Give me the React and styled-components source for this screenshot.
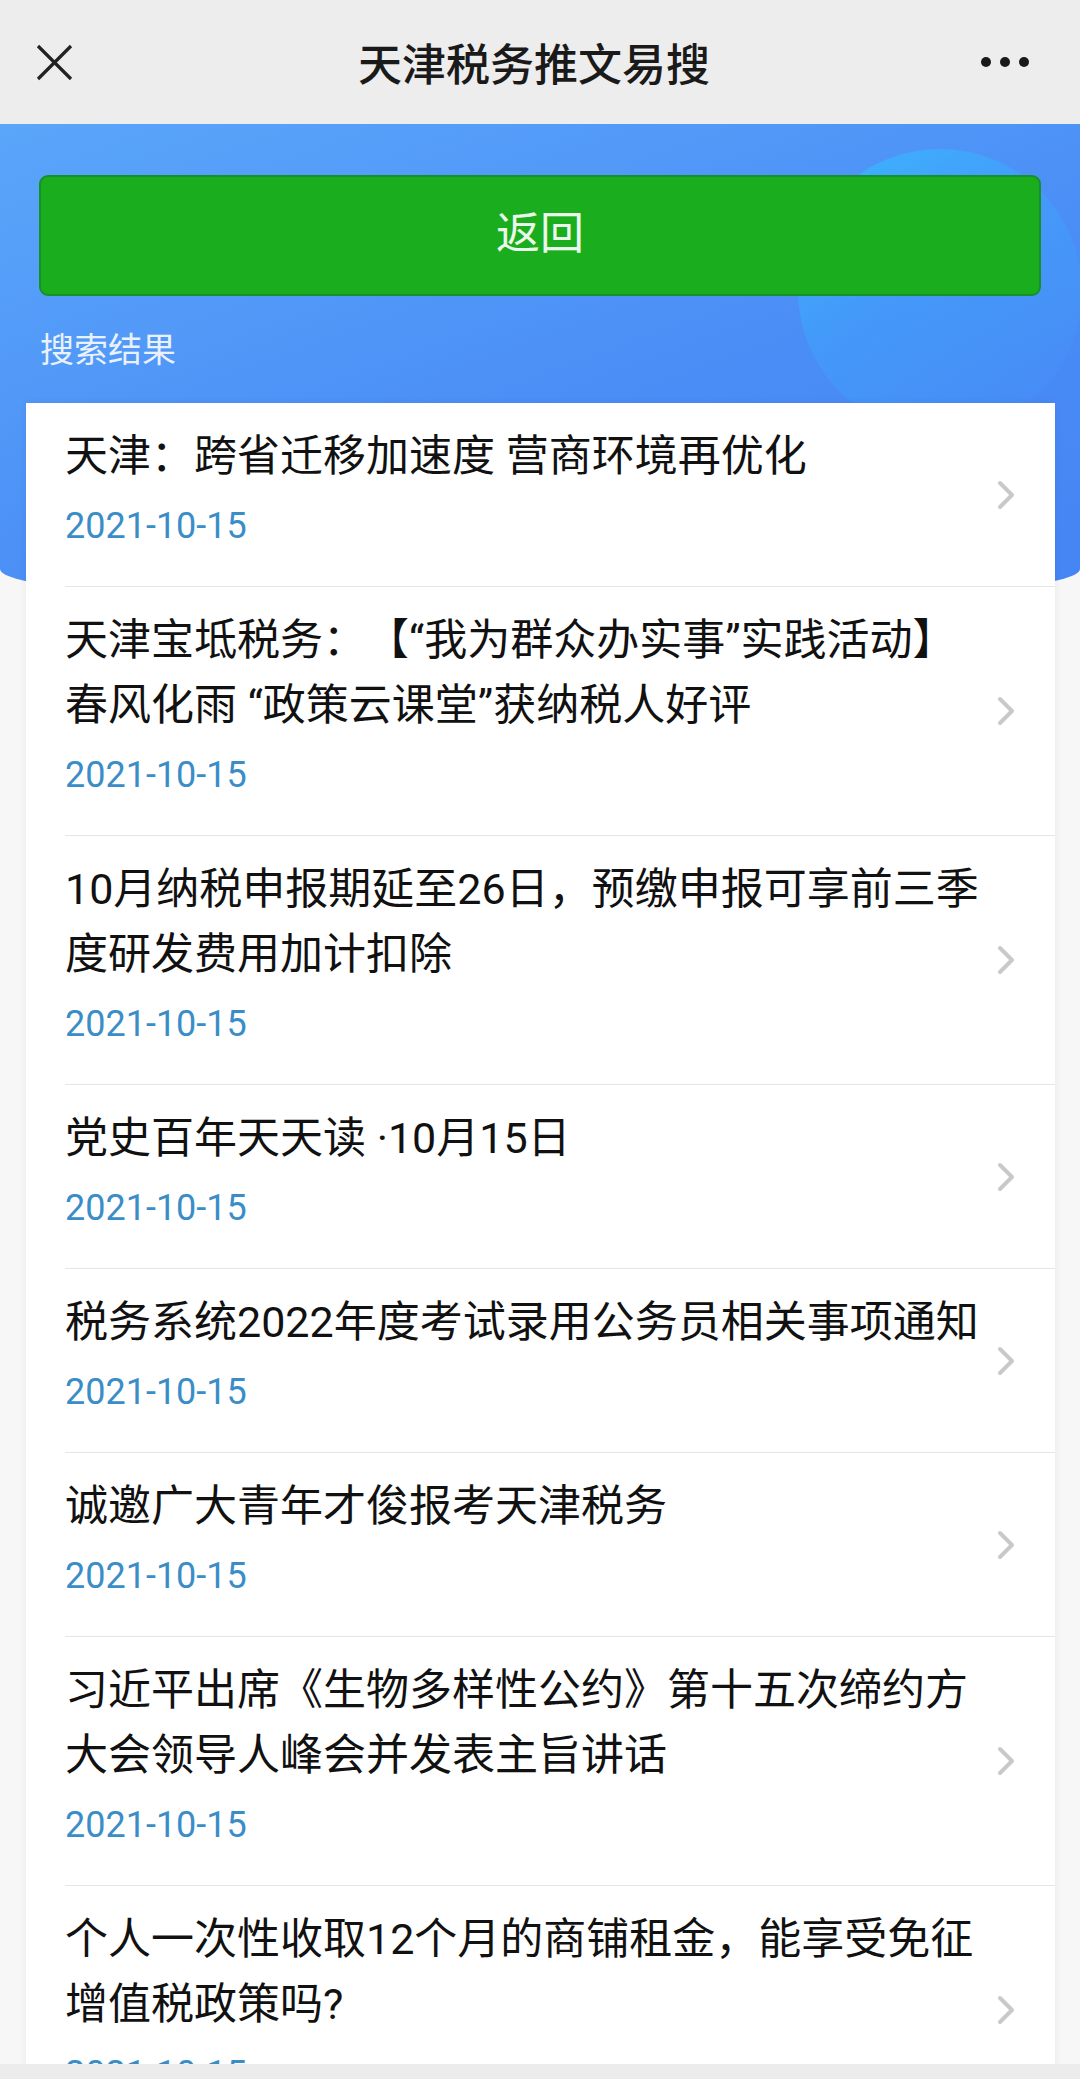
import styled, { createGlobalStyle } from "styled-components";

const GlobalStyle = createGlobalStyle`
  html, body {
    margin: 0;
    padding: 0;
    background: #f7f7f7;
  }
  body {
    font-family: Roboto, "Noto Sans CJK SC", sans-serif;
  }
`;

const articles = [
  { id: 1, title: "天津：跨省迁移加速度 营商环境再优化", date: "2021-10-15" },
  {
    id: 2,
    title: "天津宝坻税务：【“我为群众办实事”实践活动】春风化雨 “政策云课堂”获纳税人好评",
    date: "2021-10-15",
  },
  {
    id: 3,
    title: "10月纳税申报期延至26日，预缴申报可享前三季度研发费用加计扣除",
    date: "2021-10-15",
  },
  { id: 4, title: "党史百年天天读 ·10月15日", date: "2021-10-15" },
  { id: 5, title: "税务系统2022年度考试录用公务员相关事项通知", date: "2021-10-15" },
  { id: 6, title: "诚邀广大青年才俊报考天津税务", date: "2021-10-15" },
  {
    id: 7,
    title: "习近平出席《生物多样性公约》第十五次缔约方大会领导人峰会并发表主旨讲话",
    date: "2021-10-15",
  },
  {
    id: 8,
    title: "个人一次性收取12个月的商铺租金，能享受免征增值税政策吗?",
    date: "2021-10-15",
  },
];

const CloseIcon = () => (
  <svg width="37" height="37" viewBox="0 0 37 37">
    <path d="M2 2 L35 35 M35 2 L2 35" stroke="#222" strokeWidth="3.2" fill="none" />
  </svg>
);

const Chevron = () => (
  <svg width="18" height="30" viewBox="0 0 18 30">
    <polyline
      points="3,3 15,15 3,27"
      fill="none"
      stroke="#c9c9c9"
      strokeWidth="4"
      strokeLinecap="round"
      strokeLinejoin="round"
    />
  </svg>
);

const App = () => {
  return (
    <Page>
      <GlobalStyle />
      <TopBar>
        <BarSide>
          <CloseIcon />
        </BarSide>
        <Title>天津税务推文易搜</Title>
        <BarSide $right>
          <Dots>
            <span />
            <span />
            <span />
          </Dots>
        </BarSide>
      </TopBar>
      <Scroll>
        <Hero>
          <BackButton>返回</BackButton>
          <SectionLabel>搜索结果</SectionLabel>
        </Hero>
        <ResultCard>
          {articles.map(({ id, title, date }) => (
            <ResultRow key={id}>
              <RowText>
                <RowTitle>{title}</RowTitle>
                <RowDate>{date}</RowDate>
              </RowText>
              <Chevron />
            </ResultRow>
          ))}
        </ResultCard>
      </Scroll>
      <BottomStrip />
    </Page>
  );
};

export default App;

const Page = styled.div`
  height: 2079px;
  display: flex;
  flex-direction: column;
  overflow: hidden;
  background: #f7f7f7;
`;

const TopBar = styled.header`
  flex: 0 0 124px;
  display: grid;
  grid-template-columns: 1fr auto 1fr;
  align-items: center;
  background: #ededed;
`;

const BarSide = styled.div`
  display: flex;
  justify-content: ${(p) => (p.$right ? "flex-end" : "flex-start")};
  padding: ${(p) => (p.$right ? "0 51px 0 0" : "0 0 0 36px")};
`;

const Title = styled.h1`
  margin: 0;
  padding-right: 12px;
  font-family: "Noto Sans CJK SC", sans-serif;
  font-size: 44px;
  font-weight: 500;
  color: #1a1a1a;
`;

const Dots = styled.div`
  display: flex;
  gap: 9px;

  span {
    width: 10px;
    height: 10px;
    border-radius: 50%;
    background: #1a1a1a;
  }
`;

const Scroll = styled.main`
  flex: 1;
  overflow: hidden;
`;

const Hero = styled.section`
  position: relative;
  overflow: hidden;
  height: 485px;
  box-sizing: border-box;
  padding: 51px 39px 0;
  display: flex;
  flex-direction: column;
  background: linear-gradient(160deg, #5aa6fa 0%, #4b8ef6 55%, #4484f4 100%);
  border-radius: 0 0 50% 50% / 0 0 40px 40px;

  &::before {
    content: "";
    position: absolute;
    left: 798px;
    top: 25px;
    width: 284px;
    height: 284px;
    border-radius: 50%;
    background: linear-gradient(145deg, rgba(52, 190, 255, 0.75) 0%, rgba(60, 165, 252, 0.45) 45%, rgba(70, 140, 245, 0) 100%);
  }
`;

const BackButton = styled.button`
  position: relative;
  height: 121px;
  border: 2px solid #15902a;
  border-radius: 9px;
  background: #1aad1e;
  color: #eaf7ea;
  font-family: "Noto Sans CJK SC", sans-serif;
  font-size: 44px;
  padding: 0 0 12px;
`;

const SectionLabel = styled.div`
  position: relative;
  margin-top: 27px;
  line-height: 50px;
  padding-left: 1px;
  font-family: "Noto Sans CJK SC", sans-serif;
  font-size: 34px;
  color: #e9f1fd;
`;

const ResultCard = styled.div`
  position: relative;
  margin: -206px 25px 0 26px;
  background: #fff;
  box-shadow: 0 0 8px rgba(0, 0, 0, 0.06);
`;

const ResultRow = styled.div`
  display: flex;
  align-items: center;
  margin-left: 39px;
  padding-right: 40px;
  border-bottom: 1px solid #e6e6e6;
`;

const RowText = styled.div`
  flex: 0 0 920px;
  display: flex;
  flex-direction: column;
  margin-right: auto;
  padding: 21px 0 38px;
`;

const RowTitle = styled.div`
  font-family: Roboto, "Noto Sans CJK SC", sans-serif;
  font-size: 43px;
  line-height: 65px;
  color: #111;
  text-spacing-trim: space-all;
`;

const RowDate = styled.div`
  margin-top: 15px;
  font-family: Roboto, sans-serif;
  font-size: 36px;
  line-height: 44px;
  color: #3a8dc7;
`;

const BottomStrip = styled.footer`
  flex: 0 0 15px;
  background: #ececec;
`;
